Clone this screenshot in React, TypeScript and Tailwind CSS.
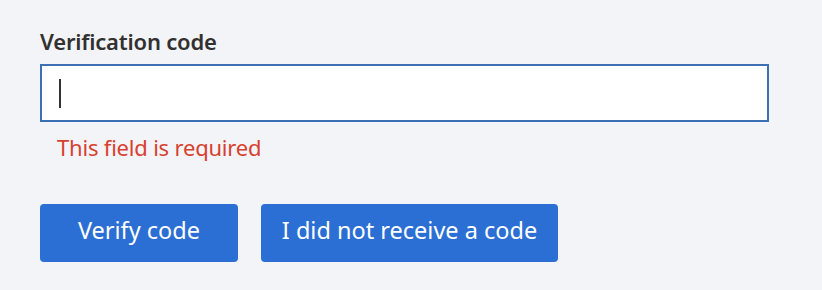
import React from "react";

export default function App() {
  return (
    <div className="w-[822px] h-[290px] bg-[#f3f4f8] pt-[26px] pl-[40px] pr-[53px]" style={{ fontFamily: '"Noto Sans", "Open Sans", sans-serif' }}>
      <label className="block text-[22px] leading-[30px] font-semibold tracking-[-0.2px] text-[#323130]">Verification code</label>
      <div className="mt-[8px] h-[58px] w-[729px] border-2 border-[#3d6fb4] bg-white flex items-center pl-[17px]">
        <div className="w-[2px] h-[29px] bg-[#333]" />
      </div>
      <div className="mt-[10px] pl-[17px] text-[22px] leading-[30px] tracking-[-0.2px] text-[#d8402f]">This field is required</div>
      <div className="mt-[42px] flex gap-[23px]">
        <button className="h-[58px] w-[198px] rounded-[4px] bg-[#2b6fd4] text-white text-[23.5px] pb-[4px]">Verify code</button>
        <button className="h-[58px] w-[297px] rounded-[4px] bg-[#2b6fd4] text-white text-[23.5px] pb-[4px]">I did not receive a code</button>
      </div>
    </div>
  );
}
